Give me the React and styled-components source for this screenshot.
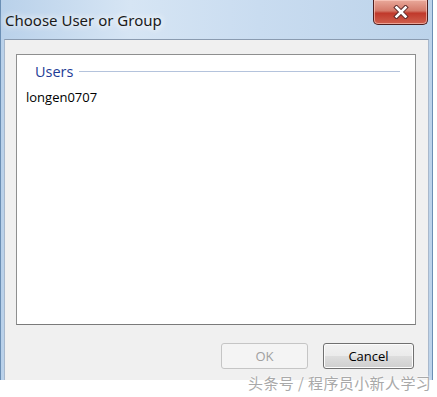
import React from 'react'
import styled, { createGlobalStyle } from 'styled-components'

const GlobalStyle = createGlobalStyle`
  html, body {
    margin: 0;
    padding: 0;
    background: #ffffff;
  }
  body {
    font-family: "Noto Sans", "Open Sans", sans-serif;
  }
`
const Page = styled.div`
  width: 437px;
  height: 397px;
  position: relative;
  overflow: hidden;
  background: #ffffff;
`
const Window = styled.div`
  width: 433px;
  height: 380px;
  display: flex;
  flex-direction: column;
  box-sizing: border-box;
  border-left: 1px solid #6b8fb5;
  border-right: 1px solid #6b8fb5;
  background: linear-gradient(90deg, #b9d1ea 0%, #d6e5f4 30%, #c9dcf0 60%, #bcd3ea 100%);
  padding: 0 3px 0 3px;
`
const TitleBar = styled.div`
  height: 39px;
  display: flex;
  align-items: flex-start;
  justify-content: space-between;
`
const Title = styled.div`
  font-size: 15px;
  color: #1a1a1a;
  padding: 10px 0 0 1px;
  text-shadow: 0 0 8px #ffffff, 0 0 6px #ffffff;
`
const CloseButton = styled.div`
  width: 55px;
  height: 25px;
  margin-right: 1px;
  box-sizing: border-box;
  border: 1px solid #4e1f1f;
  border-top: none;
  border-radius: 0 0 5px 5px;
  background: linear-gradient(180deg, #e9a99b 0%, #d47a6a 45%, #c0392b 55%, #d0604e 100%);
  box-shadow: inset 0 0 0 1px rgba(255, 210, 200, 0.6);
  display: flex;
  align-items: center;
  justify-content: center;
`
const Client = styled.div`
  flex: 1;
  background: #f0f0f0;
  border-top: 1px solid #8a9bb0;
  border-left: 1px solid #a8b8cc;
  border-right: 1px solid #a8b8cc;
  display: flex;
  flex-direction: column;
  padding: 14px 12px 11px 11px;
`
const ListBox = styled.div`
  flex: 1;
  background: #ffffff;
  border: 1px solid #8e8f8f;
  border-bottom-color: #7a7a7a;
  padding: 6px 15px 0 9px;
  display: flex;
  flex-direction: column;
`
const GroupHeader = styled.div`
  display: flex;
  align-items: center;
  gap: 6px;
  padding-left: 9px;
  height: 20px;
`
const GroupLabel = styled.span`
  color: #1e3c96;
  font-size: 14.5px;
  font-family: "Open Sans", "Noto Sans", sans-serif;
`
const GroupLine = styled.div`
  flex: 1;
  height: 1px;
  background: #b4c3dc;
`
const Item = styled.div`
  font-size: 13px;
  color: #000000;
  margin-top: 7px;
  font-family: "Open Sans", "Noto Sans", sans-serif;
`
const ButtonRow = styled.div`
  display: flex;
  justify-content: flex-end;
  gap: 15px;
  margin-top: 18px;
  padding-right: 2px;
`
const Button = styled.div`
  width: ${p => p.$w}px;
  height: 26px;
  box-sizing: border-box;
  border-radius: 3px;
  border: 1px solid ${p => (p.$disabled ? '#c5c5c5' : '#707070')};
  background: ${p =>
    p.$disabled
      ? '#f4f4f4'
      : 'linear-gradient(180deg, #f2f2f2 0%, #ebebeb 48%, #dddddd 52%, #cfcfcf 100%)'};
  box-shadow: ${p => (p.$disabled ? 'none' : 'inset 0 0 0 1px #fcfcfc')};
  color: ${p => (p.$disabled ? '#a0a0a0' : '#000000')};
  font-size: 13px;
  font-family: "Open Sans", "Noto Sans", sans-serif;
  display: flex;
  align-items: center;
  justify-content: center;
`
const Watermark = styled.div`
  position: absolute;
  left: 248px;
  top: 373px;
  font-size: 15px;
  line-height: 19px;
  letter-spacing: 0.4px;
  white-space: nowrap;
  color: #a9a9a9;
  font-family: "Noto Sans CJK SC", sans-serif;
  text-shadow: 0 0 2px #ffffff, 0 0 2px #ffffff;
`

const CloseIcon = () => (
  <svg width="16" height="14" viewBox="0 0 16 14">
    <path d="M3.5 2.5 L12.5 11.5 M12.5 2.5 L3.5 11.5" stroke="#5a2a2a" strokeWidth="4.5" strokeLinecap="square" />
    <path d="M3.5 2.5 L12.5 11.5 M12.5 2.5 L3.5 11.5" stroke="#ffffff" strokeWidth="2.6" strokeLinecap="square" />
  </svg>
)

export default function App() {
  return (
    <Page>
      <GlobalStyle />
      <Window>
        <TitleBar>
          <Title>Choose User or Group</Title>
          <CloseButton><CloseIcon /></CloseButton>
        </TitleBar>
        <Client>
          <ListBox>
            <GroupHeader>
              <GroupLabel>Users</GroupLabel>
              <GroupLine />
            </GroupHeader>
            <Item>longen0707</Item>
          </ListBox>
          <ButtonRow>
            <Button $w={87} $disabled>OK</Button>
            <Button $w={91}>Cancel</Button>
          </ButtonRow>
        </Client>
      </Window>
      <Watermark>头条号 / 程序员小新人学习</Watermark>
    </Page>
  )
}
